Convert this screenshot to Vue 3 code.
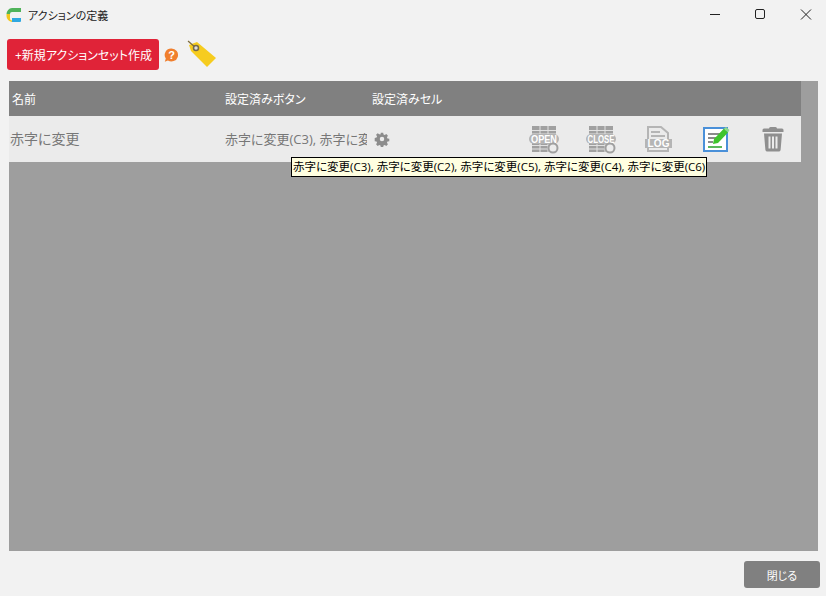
<script setup>
const cols = [
  { label: '名前', cls: 'c-name' },
  { label: '設定済みボタン', cls: 'c-btn' },
  { label: '設定済みセル', cls: 'c-cell' }
]
const buttons = '赤字に変更(C3), 赤字に変更(C2), 赤字に変更(C5), 赤字に変更(C4), 赤字に変更(C6)'
</script>

<template>
  <div class="window">
    <header class="titlebar">
      <svg class="logo" width="16" height="16" viewBox="0 0 16 16">
        <path d="M6 1h9v4H6a2 2 0 0 0-2 2H.5A6 6 0 0 1 6 1z" fill="#4fb35a" />
        <path d="M.5 7H4v4.500a2 2 0 0 0 2 2V15A6 6 0 0 1 .5 9z" fill="#f2c81e" />
        <path d="M6 11h9v3a1 1 0 0 1-1 1H6z" fill="#2fa8e0" />
      </svg>
      <span class="title">アクションの定義</span>
      <div class="winctl">
        <svg width="46" height="30" viewBox="0 0 46 30"><path d="M22 14.500h10" stroke="#222" stroke-width="1" /></svg>
        <svg width="46" height="30" viewBox="0 0 46 30"><rect x="21.500" y="9.500" width="9" height="9" rx="1.500" fill="none" stroke="#222" /></svg>
        <svg width="46" height="30" viewBox="0 0 46 30"><path d="M21 9.500l10 10M31 9.500l-10 10" stroke="#222" fill="none" /></svg>
      </div>
    </header>

    <div class="toolbar">
      <button class="primary">+新規アクションセット作成</button>
      <svg class="help" width="16" height="16" viewBox="0 0 16 16">
        <path d="M8.500 1.500a6.500 6.500 0 1 1-3.600 11.900L1.800 14.800l1-3.200A6.500 6.500 0 0 1 8.500 1.500z" fill="#f07f2e" />
        <text x="8.500" y="12" text-anchor="middle" class="help-q">?</text>
      </svg>
      <svg class="tag" width="32" height="31" viewBox="0 0 32 31">
        <path d="M2 6l8-3 19 16-9 9L4 12z" fill="#f6cc1f" />
        <path d="M1 2l8 7" stroke="#7d6a3a" stroke-width="1.200" />
        <circle cx="9" cy="9" r="2.500" fill="#ddd" stroke="#74694a" stroke-width="1.500" />
      </svg>
    </div>

    <main class="panel">
      <div class="table">
        <div class="thead">
          <div v-for="c in cols" :key="c.label" :class="c.cls">{{ c.label }}</div>
        </div>
        <div class="row">
          <div class="c-name name-val">赤字に変更</div>
          <div class="c-btn btn-val"><span class="clip">{{ buttons }}</span></div>
          <div class="c-cell">
            <svg width="16" height="16" viewBox="0 0 16 16">
              <path fill="#8c8c8c" fill-rule="evenodd" d="M6.700 1h2.600l.4 2 1.300.6 1.800-1.100 1.800 1.800-1.100 1.800.6 1.300 2 .4v2.600l-2 .4-.6 1.300 1.100 1.800-1.800 1.800-1.800-1.100-1.300.6-.4 2H6.700l-.4-2-1.300-.6-1.800 1.100-1.800-1.800 1.100-1.800-.6-1.300-2-.4V6.800l2-.4.6-1.300-1.100-1.800 1.800-1.800L5 2.600 6.300 3zM8 5.600a2.500 2.500 0 1 0 0 5 2.500 2.500 0 0 0 0-5z" transform="translate(0.800 0.800) scale(0.9)" />
            </svg>
          </div>
          <div class="actions">
            <svg class="act" width="32" height="30" viewBox="0 0 32 30">
              <rect x="3" y="2" width="24" height="26" fill="#a0a0a0" />
              <path d="M3 6.500h24M3 10h24M3 21.500h24M3 25h24M11 2v26M19 2v26" stroke="#e2e2e2" stroke-width="1" />
              <rect x="0" y="10" width="30" height="10" rx="5" fill="#b4b4b4" />
              <text x="15" y="18.500" text-anchor="middle" textLength="26" lengthAdjust="spacingAndGlyphs" class="ico-t">OPEN</text>
              <circle cx="24" cy="24" r="4.500" fill="#ececec" stroke="#a0a0a0" stroke-width="2" />
            </svg>
            <svg class="act" width="32" height="30" viewBox="0 0 32 30">
              <rect x="3" y="2" width="24" height="26" fill="#a0a0a0" />
              <path d="M3 6.500h24M3 10h24M3 21.500h24M3 25h24M11 2v26M19 2v26" stroke="#e2e2e2" stroke-width="1" />
              <rect x="0" y="10" width="30" height="10" rx="5" fill="#b4b4b4" />
              <text x="15" y="18.500" text-anchor="middle" textLength="27" lengthAdjust="spacingAndGlyphs" class="ico-t">CLOSE</text>
              <circle cx="24" cy="24" r="4.500" fill="#ececec" stroke="#a0a0a0" stroke-width="2" />
            </svg>
            <svg class="act" width="32" height="30" viewBox="0 0 32 30">
              <path d="M5 3h13l7 6v18H5z" fill="#ebebeb" stroke="#b5b5b5" stroke-width="2" />
              <path d="M8 8h9M8 12h14" stroke="#b5b5b5" stroke-width="2" />
              <rect x="2" y="15" width="27" height="9" fill="#b5b5b5" />
              <text x="15.500" y="23" text-anchor="middle" textLength="22" lengthAdjust="spacing" class="ico-t log">LOG</text>
            </svg>
            <svg class="act" width="32" height="30" viewBox="0 0 32 30">
              <path d="M4 4h23v23H4z" fill="#fff" stroke="#4a90d9" stroke-width="2" />
              <path d="M8 10h13M8 14h10M8 18h5" stroke="#666" stroke-width="1.600" />
              <path d="M8 23h14" stroke="#33a633" stroke-width="1.600" />
              <path d="M13 20l1-5L24 4.500l4 4L18 19z" fill="#3fc42c" />
              <path d="M24 4.500l2-1.500 3.500 3-1.500 2.500z" fill="#8fd98f" />
            </svg>
            <svg class="act" width="32" height="30" viewBox="0 0 32 30">
              <path d="M13.500 3h5a1.500 1.500 0 0 1 1.500 1.500H25a1.500 1.500 0 0 1 1.500 1.500V8h-21V6A1.500 1.500 0 0 1 7 4.500h5A1.500 1.500 0 0 1 13.500 3z" fill="#8f8f8f" />
              <path fill="#8f8f8f" fill-rule="evenodd" d="M7 9.500h18l-1.400 16.500a2 2 0 0 1-2 1.500H10.400a2 2 0 0 1-2-1.500zM11.500 12.500v12h2v-12zm3.500 0v12h2v-12zm3.500 0v12h2v-12z" />
            </svg>
          </div>
        </div>
      </div>
      <div class="tooltip">{{ buttons }}</div>
    </main>

    <footer class="footer">
      <button class="close">閉じる</button>
    </footer>
  </div>
</template>

<style>
html, body { margin: 0; background: #f2f2f2; }
</style>

<style scoped>
.window {
  width: 826px;
  height: 596px;
  display: flex;
  flex-direction: column;
  background: #f2f2f2;
  font-family: "Open Sans", "Noto Sans CJK JP", sans-serif;
  font-feature-settings: "palt";
  overflow: hidden;
}
.titlebar {
  height: 30px;
  display: flex;
  align-items: center;
  padding-left: 6px;
  flex: none;
}
.logo { flex: none; }
.title { margin-left: 6px; font-size: 11px; color: #222; }
.winctl { margin-left: auto; display: flex; }
.toolbar {
  height: 31px;
  margin-top: 9px;
  padding-left: 7px;
  display: flex;
  align-items: center;
  flex: none;
}
.primary {
  width: 152px;
  height: 31px;
  border: 0;
  border-radius: 3px;
  background: #e02338;
  color: #fff;
  font: inherit;
  font-feature-settings: "palt";
  font-size: 12px;
  padding: 0 0 0 1px;
  white-space: nowrap;
}
.help { margin-left: 4px; flex: none; }
.help-q { font: bold 11px "Liberation Sans", sans-serif; fill: #fff; }
.tag { margin-left: 8px; flex: none; }
.panel {
  position: relative;
  margin: 11px 8px 0 9px;
  height: 470px;
  background: #9e9e9e;
  flex: none;
}
.table { width: 792px; }
.thead {
  height: 35px;
  display: flex;
  align-items: center;
  background: #808080;
  color: #fff;
  font-size: 12px;
}
.row {
  height: 46px;
  display: flex;
  align-items: center;
  background: #ebebeb;
  color: #777;
  font-size: 13px;
}
.c-name { width: 216px; padding-left: 2px; box-sizing: border-box; }
.thead .c-name { padding-left: 3px; }
.name-val { padding-left: 1px; padding-bottom: 2px; font-size: 14px; }
.c-btn { width: 147px; flex: none; box-sizing: border-box; }
.btn-val { padding-bottom: 2px; }
.c-cell { width: 150px; flex: none; display: flex; }
.row .c-cell { padding-left: 2px; box-sizing: border-box; }
.clip { display: block; width: 142px; overflow: hidden; white-space: nowrap; }
.actions { display: flex; gap: 25px; margin-left: 7px; }
.act { flex: none; }
.ico-t {
  font: bold 10px "Liberation Sans", sans-serif;
  fill: #fff;
}
.tooltip {
  position: absolute;
  left: 282px;
  top: 76px;
  height: 20px;
  line-height: 18px;
  box-sizing: border-box;
  padding: 0 1px;
  border: 1px solid #000;
  background: #ffffe1;
  color: #000;
  font-size: 11.500px;
  white-space: nowrap;
}
.footer {
  flex: 1;
  display: flex;
  justify-content: flex-end;
  align-items: flex-start;
  padding: 10px 6px 0 0;
}
.close {
  width: 76px;
  height: 27px;
  border: 0;
  border-radius: 3px;
  background: #808080;
  color: #fff;
  font: inherit;
  font-feature-settings: "palt";
  font-size: 11px;
  padding: 0;
}
</style>
